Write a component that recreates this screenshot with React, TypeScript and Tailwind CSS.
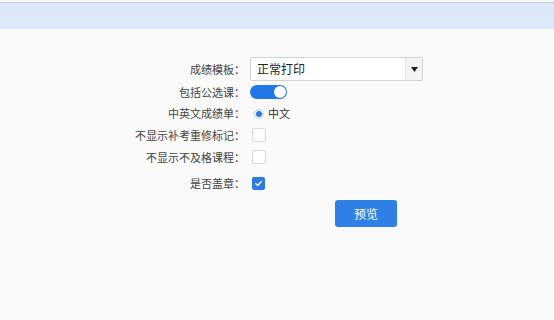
import React from "react";

const font = { fontFamily: '"Noto Sans CJK SC", "Noto Sans", sans-serif' };

function Label({ children }: { children: React.ReactNode }) {
  return (
    <div className="w-[250px] shrink-0 text-right text-[11px] leading-none text-[#444] pr-[5px]">
      {children}
    </div>
  );
}

function Checkbox({ checked }: { checked?: boolean }) {
  if (checked) {
    return (
      <div className="ml-[2px] flex h-[13px] w-[13px] items-center justify-center rounded-[2px] bg-[#2c7be0]">
        <svg width="9" height="9" viewBox="0 0 10 10">
          <path d="M2 5.2 L4.2 7.3 L8.2 2.8" fill="none" stroke="white" strokeWidth="1.6" strokeLinecap="round" strokeLinejoin="round" />
        </svg>
      </div>
    );
  }
  return <div className="ml-[2px] h-[14px] w-[14px] rounded-[2px] border border-[#dcdcdc] bg-white" />;
}

export default function App() {
  return (
    <div className="min-h-[320px] w-full bg-[#fafafa]" style={font}>
      <div className="h-[2px] bg-[#f4f6f9]" />
      <div className="h-[1px] bg-[#c9cfd8]" />
      <div className="h-[26px] bg-[#dde9fb]" />
      <div className="flex flex-col pt-[28px]">
        <div className="flex h-[24px] items-center">
          <Label>成绩模板：</Label>
          <div className="flex h-[24px] w-[173px] items-stretch overflow-hidden rounded-[2px] border border-[#d4d4d4] bg-white">
            <div className="flex flex-1 items-center pl-[6px] text-[12px] text-[#222]">正常打印</div>
            <div className="flex w-[17px] items-center justify-center border-l border-[#e2e2e2] bg-[#f3f3f3]">
              <svg width="7" height="5" viewBox="0 0 7 5">
                <path d="M0 0 L7 0 L3.5 5 Z" fill="#222" />
              </svg>
            </div>
          </div>
        </div>
        <div className="flex h-[22px] items-center">
          <Label>包括公选课：</Label>
          <div className="relative h-[14px] w-[37px] rounded-full bg-[#1f78e6]">
            <div className="absolute right-[1px] top-[1px] h-[12px] w-[12px] rounded-full bg-white" />
          </div>
        </div>
        <div className="flex h-[21px] items-center">
          <Label>中英文成绩单：</Label>
          <div className="ml-[4px] flex h-[10px] w-[10px] items-center justify-center rounded-full border border-[#b9d3f3] bg-white">
            <div className="h-[6px] w-[6px] rounded-full bg-[#2c7be0]" />
          </div>
          <span className="ml-[4px] text-[11px] leading-none text-[#333]">中文</span>
        </div>
        <div className="flex h-[22px] items-center">
          <Label>不显示补考重修标记：</Label>
          <Checkbox />
        </div>
        <div className="flex h-[22px] items-center">
          <Label>不显示不及格课程：</Label>
          <Checkbox />
        </div>
        <div className="mt-[2px] flex h-[27px] items-center">
          <Label>是否盖章：</Label>
          <Checkbox checked />
        </div>
        <div className="mt-[3px] flex">
          <div className="w-[335px] shrink-0" />
          <button className="flex h-[27px] w-[62px] items-center justify-center rounded-[3px] bg-[#2f80e6] text-[12px] text-white">
            预览
          </button>
        </div>
      </div>
    </div>
  );
}
